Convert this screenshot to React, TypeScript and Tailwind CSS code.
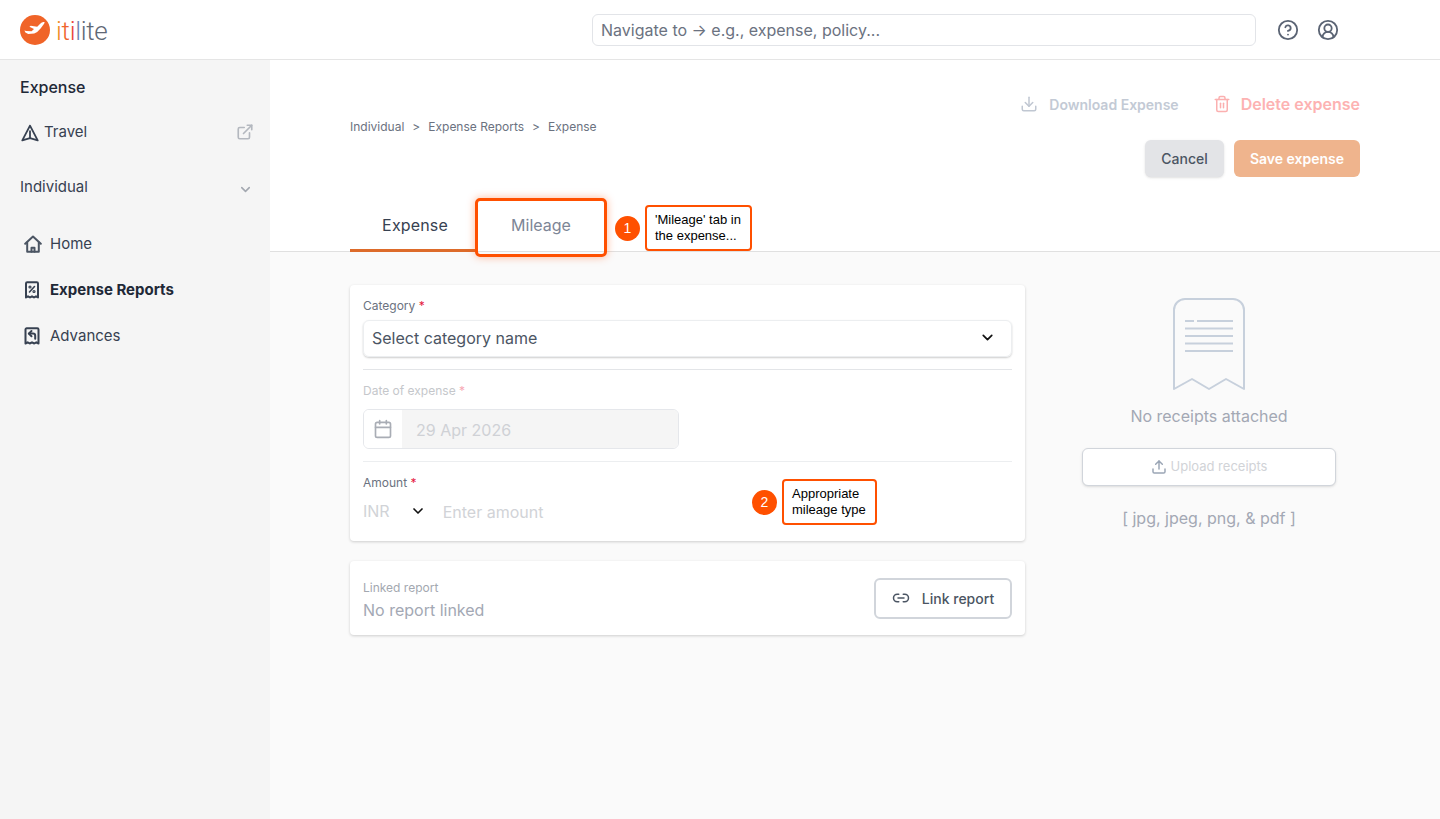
import React from "react";
import { ChevronDown, CircleHelp, CircleUserRound, Download, ExternalLink, Trash2, Calendar, Link2, Upload } from "lucide-react";

const F = { fontFamily: "Inter, 'Liberation Sans', sans-serif" };

function Logo() {
  return (
    <div className="flex items-center w-[87px] shrink-0">
      <svg width="30" height="30" viewBox="0 0 30 30" className="shrink-0">
        <circle cx="15" cy="15" r="15" fill="#f06428" />
        <path d="M25 7.200c-1.500-.5-3.200.1-4.500 1.300l-3.300 3.200-6.500-.9-1.300.9 4.600 2.200-2.400 2.300-5.400-.2-1.800-.6 1 2.200 2.800 1.400 6-.6 4-1.800-1 .3 3.600-3.600 3.100-4.200c.4-.7.600-1.300.6-1.900z" fill="#fff" />
      </svg>
      <span className="ml-[6px] mt-[3px] text-[26px] leading-none font-light tracking-[-0.3px]" style={{ fontFamily: "Roboto, sans-serif" }}>
        <span className="text-[#f08a24]">i</span>
        <span className="text-[#f0642c]">t</span>
        <span className="text-[#e8433a]">i</span>
        <span className="text-[#6f86b4]">l</span>
        <span className="text-[#5f6875]">ite</span>
      </span>
    </div>
  );
}

function TravelIcon() {
  return (
    <svg width="18" height="18" viewBox="0 0 18 18" fill="none" stroke="#374151" strokeWidth="1.8" strokeLinejoin="round">
      <path d="M9 1.600 1.300 16.400 9 14.200l7.700 2.200z" />
      <path d="M9 6.500v7.700" />
    </svg>
  );
}

function HomeIcon() {
  return (
    <svg width="18" height="18" viewBox="0 0 18 18" fill="none" stroke="#4b5563" strokeWidth="2" strokeLinejoin="round" strokeLinecap="round">
      <path d="M1.200 8.800 9 1.500l7.800 7.300" />
      <path d="M3.200 7.500v9.200h11.600V7.500" />
      <path d="M7.500 16.700v-4h3v4" />
    </svg>
  );
}

function ReceiptPercent() {
  return (
    <svg width="16" height="18" viewBox="0 0 16 18" fill="none" stroke="#374151" strokeWidth="2" strokeLinejoin="round" strokeLinecap="round">
      <path d="M2 16.500V2.500a1.200 1.200 0 0 1 1.200-1.200h9.600A1.200 1.200 0 0 1 14 2.500v14l-2-1.200-2 1.200-2-1.200-2 1.200-2-1.200z" />
      <path d="M10.500 5.500 5.500 11" strokeWidth="1.600" />
      <circle cx="6" cy="6" r=".6" />
      <circle cx="10" cy="10.500" r=".6" />
    </svg>
  );
}

function ReceiptBack() {
  return (
    <svg width="16" height="18" viewBox="0 0 16 18" fill="none" stroke="#374151" strokeWidth="2" strokeLinejoin="round" strokeLinecap="round">
      <path d="M1.500 16.500V2.500a1.200 1.200 0 0 1 1.200-1.200h10.600a1.200 1.200 0 0 1 1.200 1.200v14l-2.200-1.200-2 1.200-2.300-1.200-2.300 1.200-2-1.200z" />
      <path d="M7.500 4 4.800 6.600l2.700 2.600" />
      <path d="M5 6.600h4a2.200 2.200 0 0 1 2.200 2.200v3" />
    </svg>
  );
}

function EmptyReceipt() {
  return (
    <svg width="72" height="92" viewBox="0 0 72 92" fill="none" stroke="#c7d0dc" strokeWidth="2">
      <path d="M1 91V12A11 11 0 0 1 12 1h48a11 11 0 0 1 11 11v79L53 81 36 91 19 81z" strokeLinejoin="round" />
      <path d="M12 23h9M24 23h36M12 30.500h48M12 38h48M12 45.500h48M12 53h48" />
    </svg>
  );
}

function Req() {
  return <span className="text-[#e5173f]"> *</span>;
}

function Sidebar() {
  return (
    <aside className="w-[270px] shrink-0 bg-[#f5f5f5] flex flex-col">
      <div className="px-5 pt-[17px] text-[16px] leading-[20px] font-medium text-[#1f2937]">Expense</div>
      <div className="flex items-center justify-between pl-[21px] pr-[16px] mt-[24px] h-[24px]">
        <div className="flex items-center gap-[5px] text-[15px] text-[#374151]">
          <TravelIcon />
          <span className="-mt-[2px]">Travel</span>
        </div>
        <ExternalLink size={18} color="#b4b8bf" strokeWidth={2.2} className="-mt-[3px]" />
      </div>
      <div className="flex items-center justify-between pl-5 pr-[17px] mt-[31px] h-[24px] text-[15px] text-[#374151]">
        <span className="-mt-[1px]">Individual</span>
        <ChevronDown size={15} color="#a3a8b0" strokeWidth={2.5} className="mt-[3px]" />
      </div>
      <nav className="flex flex-col gap-[22px] pl-[24px] mt-[32px] text-[15px] text-[#374151]">
        <div className="flex items-center gap-[8px] h-[24px]"><HomeIcon /><span>Home</span></div>
        <div className="flex items-center gap-[10px] h-[24px] font-bold text-[#1f2937]"><ReceiptPercent /><span>Expense Reports</span></div>
        <div className="flex items-center gap-[10px] h-[24px]"><ReceiptBack /><span>Advances</span></div>
      </nav>
    </aside>
  );
}

function Callout({ n, lines, className }: { n: string; lines: string[]; className: string }) {
  return (
    <div className={"absolute flex items-center gap-[5px] " + className} style={{ fontFamily: "'Liberation Sans', Arial, sans-serif" }}>
      <span className="w-[25px] h-[25px] rounded-full bg-[#ff5000] text-white text-[14px] flex items-center justify-center">{n}</span>
      <div className="bg-white border-2 border-[#ff5000] rounded-[4px] pl-[8px] pr-[9px] py-[5px] text-[13px] leading-[16px] text-black whitespace-nowrap">
        {lines.map((l) => <div key={l}>{l}</div>)}
      </div>
    </div>
  );
}

export default function App() {
  return (
    <div className="h-[819px] w-[1440px] flex flex-col bg-white overflow-hidden relative" style={F}>
      <header className="h-[60px] shrink-0 border-b border-[#e5e5e5] flex items-center pl-5">
        <Logo />
        <div className="ml-[485px] w-[664px] h-[32px] border border-[#e2e4e8] rounded-[6px] flex items-center px-2 text-[16px] text-[#6b7280]">
          Navigate to → e.g., expense, policy...
        </div>
        <CircleHelp size={22} color="#5b6474" strokeWidth={2} className="ml-[21px]" />
        <CircleUserRound size={22} color="#5b6474" strokeWidth={2} className="ml-[18px]" />
      </header>
      <div className="flex-1 flex min-h-0">
        <Sidebar />
        <main className="flex-1 flex flex-col min-w-0">
          <div className="h-[192px] shrink-0 border-b border-[#e0e0e0] flex flex-col pl-[80px] pr-[80px] relative">
            <div className="flex justify-between items-start">
              <div className="flex items-center gap-[8px] mt-[60px] text-[12px] leading-[14px] text-[#6b7280]">
                <span>Individual</span><span>&gt;</span><span>Expense Reports</span><span>&gt;</span><span>Expense</span>
              </div>
              <div className="flex flex-col items-end mt-[33px]">
                <div className="flex items-center h-[22px]">
                  <Download size={18} color="#c0c7d2" />
                  <span className="ml-[11px] text-[14px] font-semibold text-[#c3cad5]">Download Expense</span>
                  <Trash2 size={18} color="#fbb0b0" className="ml-[34px]" />
                  <span className="ml-[10px] text-[16px] font-semibold text-[#fdb2b2]">Delete expense</span>
                </div>
                <div className="flex gap-[10px] mt-[25px]">
                  <div className="w-[79px] h-[37px] rounded-[6px] bg-[#e3e4e7] shadow-sm flex items-center justify-center text-[14px] font-medium text-[#4b5563]">Cancel</div>
                  <div className="w-[126px] h-[37px] rounded-[6px] bg-[#efb48d] flex items-center justify-center text-[14px] font-semibold text-white">Save expense</div>
                </div>
              </div>
            </div>
            <div className="absolute left-[80px] bottom-[-1px] flex">
              <div className="w-[126px] h-[46px] flex items-center justify-center pb-[6px] pl-[4px] tracking-[0.15px] text-[16px] text-[#374151] border-b-[3px] border-[#dd6b2a]">Expense</div>
              <div className="w-[130px] h-[46px] flex items-center justify-center pb-[9px] text-[16px] text-[#7d8696]">Mileage</div>
            </div>
          </div>
          <div className="flex-1 bg-[#fafafa] flex pl-[80px] pt-[33px] gap-[57px]">
            <div className="w-[675px] flex flex-col gap-[20px]">
              <section className="h-[256px] bg-white rounded-[4px] shadow-[0_1px_3px_rgba(0,0,0,0.18)] px-[13px] pt-[13px]">
                <div className="text-[12px] leading-[16px] text-[#6b7280]">Category<Req /></div>
                <div className="mt-[6px] h-[37px] rounded-[6px] border border-[#eceef0] shadow-[0_1px_2px_rgba(0,0,0,0.2)] flex items-center justify-between pl-[8px] pr-[15px] pb-[2px] text-[16px] text-[#4b5563]">
                  Select category name
                  <ChevronDown size={17} color="#111" strokeWidth={2.4} />
                </div>
                <div className="mt-[12px] border-t border-[#e3e5e8]" />
                <div className="mt-[13px] text-[12px] leading-[16px] text-[#c5c7cb]">Date of expense<span className="text-[#f7a8b4]"> *</span></div>
                <div className="mt-[10px] w-[316px] h-[40px] rounded-[6px] border border-[#e5e7eb] flex overflow-hidden">
                  <div className="w-[38px] flex items-center justify-center bg-white"><Calendar size={20} color="#a9adb5" /></div>
                  <div className="flex-1 bg-[#f5f5f5] flex items-center pl-[14px] pt-[2px] text-[16px] text-[#cfd1d5]">29 Apr 2026</div>
                </div>
                <div className="mt-[12px] border-t border-[#eceef0]" />
                <div className="mt-[13px] text-[12px] leading-[16px] text-[#6b7280]">Amount<Req /></div>
                <div className="mt-[7px] flex items-center h-[26px] text-[16px]">
                  <span className="text-[#d1d3d7]">INR</span>
                  <ChevronDown size={16} color="#111" strokeWidth={2.5} className="ml-[20px]" />
                  <span className="ml-[17px] mt-[1px] text-[#d1d3d7]">Enter amount</span>
                </div>
              </section>
              <section className="h-[74px] bg-white rounded-[4px] shadow-[0_1px_3px_rgba(0,0,0,0.18)] px-[13px] flex items-center justify-between">
                <div className="flex flex-col gap-[3px] pt-[5px]">
                  <span className="text-[12px] leading-[16px] text-[#a3a8b0]">Linked report</span>
                  <span className="text-[16px] leading-[22px] text-[#a3a8b4]">No report linked</span>
                </div>
                <div className="w-[138px] h-[41px] rounded-[6px] border-2 border-[#d1d5db] flex items-center justify-center gap-[12px] text-[14px] font-medium text-[#4b5563]">
                  <Link2 size={18} color="#4b5563" />Link report
                </div>
              </section>
            </div>
            <aside className="w-[254px] flex flex-col items-center pt-[13px]">
              <EmptyReceipt />
              <div className="mt-[16px] text-[16px] leading-[20px] text-[#a3a8b4]">No receipts attached</div>
              <div className="mt-[22px] w-[254px] h-[38px] rounded-[6px] border border-[#d1d5db] bg-white shadow-sm flex items-center justify-center gap-[4px] text-[13px] text-[#d1d3d7]">
                <Upload size={16} color="#9aa5b5" strokeWidth={2.2} />Upload receipts
              </div>
              <div className="mt-[22px] text-[16px] leading-[20px] text-[#a3a8b4]">[ jpg, jpeg, png, &amp; pdf ]</div>
            </aside>
          </div>
        </main>
      </div>
      <div className="absolute left-[475px] top-[198px] w-[132px] h-[59px] rounded-[5px] border-[3px] border-[#ff5000] shadow-[0_0_8px_rgba(255,80,0,0.4)] pointer-events-none" />
      <Callout n="1" lines={["'Mileage' tab in", "the expense..."]} className="left-[615px] top-[205px]" />
      <Callout n="2" lines={["Appropriate", "mileage type"]} className="left-[752px] top-[479px]" />
    </div>
  );
}
